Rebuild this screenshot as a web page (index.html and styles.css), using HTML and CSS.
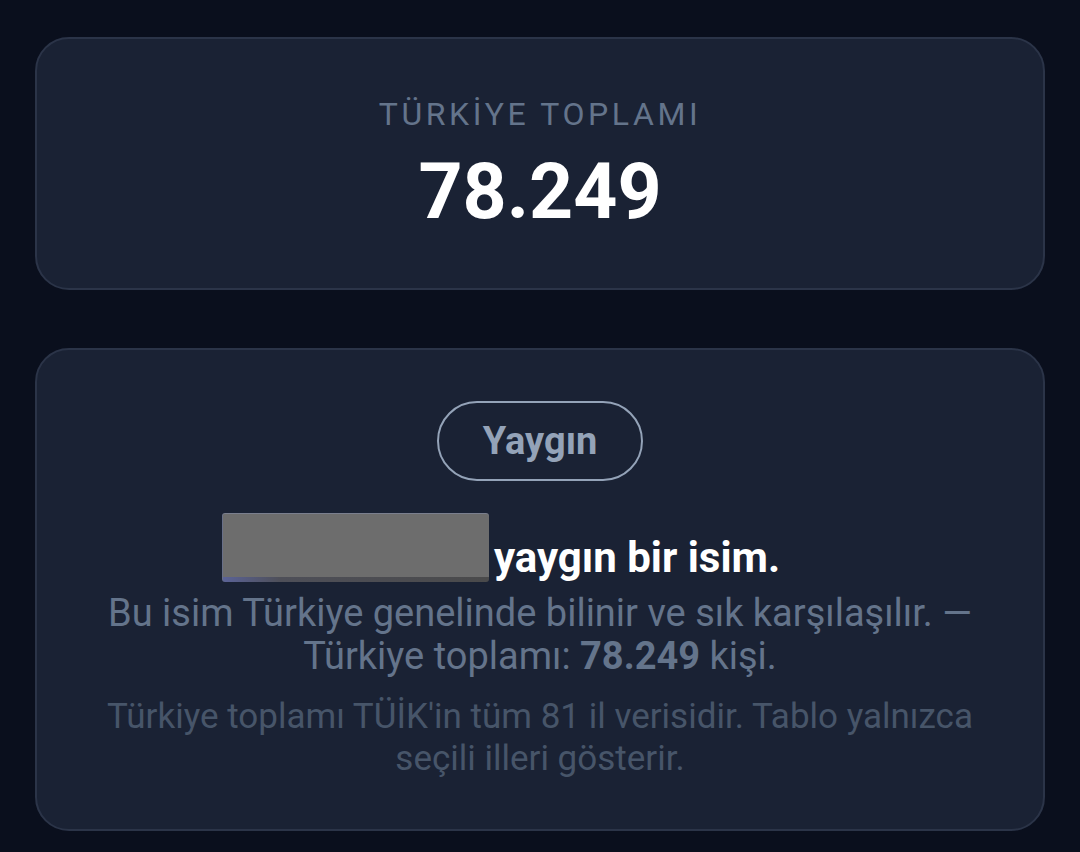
FILE: index.html
```html
<!DOCTYPE html>
<html lang="tr">
<head>
<meta charset="utf-8">
<link rel="stylesheet" href="styles.css">
</head>
<body>
<main class="page">
  <section class="card total">
    <div class="total-label">TÜRKİYE TOPLAMI</div>
    <div class="total-value">78.249</div>
  </section>
  <section class="card info">
    <div class="pill">Yaygın</div>
    <p class="headline"><span class="redact"></span>yaygın bir isim.</p>
    <p class="desc">Bu isim Türkiye genelinde bilinir ve sık karşılaşılır. — Türkiye toplamı: <strong>78.249</strong> kişi.</p>
    <p class="note">Türkiye toplamı TÜİK'in tüm 81 il verisidir. Tablo yalnızca seçili illeri gösterir.</p>
  </section>
</main>
</body>
</html>
```

FILE: styles.css
```css
html, body {
  margin: 0;
  padding: 0;
  background: #0a0f1d;
  font-family: Roboto, "Noto Sans", "Liberation Sans", sans-serif;
}
.page {
  padding: 37px 35px 0 35px;
  display: flex;
  flex-direction: column;
  gap: 58px;
}
.card {
  background: #1a2234;
  border: 2px solid #2b3448;
  border-radius: 34px;
  box-sizing: border-box;
  display: flex;
  flex-direction: column;
  align-items: center;
  text-align: center;
}
.total {
  height: 253px;
  justify-content: center;
  padding-top: 0;
}
.total-label {
  font-size: 32px;
  letter-spacing: 3.6px;
  color: #64748b;
  line-height: 40px;
}
.total-value {
  font-size: 77px;
  font-weight: 700;
  color: #ffffff;
  line-height: 82px;
  margin-top: 17px;
}
.info {
  height: 483px;
  padding: 51px 50px 0 50px;
}
.pill {
  width: 206px;
  height: 80px;
  box-sizing: border-box;
  border: 2px solid #94a3b8;
  border-radius: 40px;
  display: flex;
  align-items: center;
  justify-content: center;
  font-size: 38px;
  font-weight: 700;
  color: #94a3b8;
}
.headline {
  margin: 32px 0 0 0;
  padding-right: 78px;
  font-size: 42px;
  font-weight: 700;
  color: #ffffff;
  line-height: 68px;
}
.redact {
  display: inline-block;
  width: 267px;
  height: 69px;
  margin-right: 5px;
  vertical-align: -10px;
  border-radius: 3px;
  background:
    linear-gradient(90deg, #5b6398 0%, #4e4f58 22%, #4a4a4b 100%) bottom / 100% 5px no-repeat,
    #6d6d6d;
  box-shadow: inset 0 1px 0 #7a7f8e, inset 1px 0 0 #686f88;
}
.desc {
  margin: 0;
  font-size: 38px;
  line-height: 43px;
  color: #64748b;
}
.desc strong {
  font-weight: 700;
}
.note {
  margin: 18px 0 0 0;
  font-size: 35px;
  line-height: 42px;
  color: #475569;
}
```
